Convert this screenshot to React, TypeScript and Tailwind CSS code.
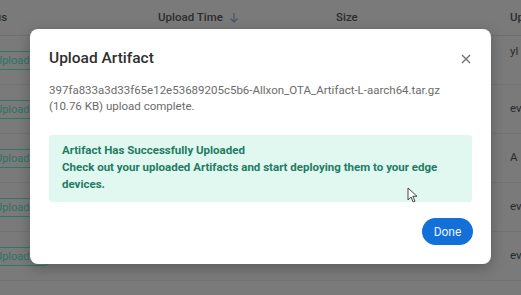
import React from "react";

const rows = [
  { right: "yl", rightOffset: true },
  { right: "ev" },
  { right: "A" },
  { right: "ev" },
  { right: "ev" },
];

export default function App() {
  return (
    <div className="relative w-[521px] h-[295px] overflow-hidden bg-[#7a7a7a] font-['Roboto','Liberation_Sans',sans-serif]">
      {/* background table */}
      <div className="flex flex-col">
        <div className="flex h-[36px] items-center border-b border-[#6e6e6e] text-[11.5px] font-medium text-[#2d2d2d]">
          <div className="-ml-[26px] w-[184px] shrink-0">Status</div>
          <div className="flex w-[178px] shrink-0 items-center gap-[6px]">
            <span>Upload Time</span>
            <svg width="10" height="12" viewBox="0 0 10 12" className="text-[#4a5666]">
              <path d="M5 1v9M1.5 6.5 5 10l3.5-3.5" fill="none" stroke="currentColor" strokeWidth="1.3" />
            </svg>
          </div>
          <div className="w-[174px] shrink-0">Size</div>
          <div>Uploader</div>
        </div>
        {rows.map((r, i) => (
          <div key={i} className="flex h-[49px] items-center border-b border-[#727272] text-[11.5px] text-[#2a2a2a]">
            <div className="-ml-[12px] w-[170px] shrink-0">
              <span className="inline-block h-[19px] rounded-[3px] border border-[#2c7a66] px-[6px] text-[11px] leading-[17px] text-[#2a7463]">
                Uploaded
              </span>
            </div>
            <div className="w-[352px] shrink-0" />
            <div className={r.rightOffset ? "-mt-[16px]" : ""}>{r.right}</div>
          </div>
        ))}
      </div>

      {/* modal */}
      <div className="absolute left-[30px] top-[29px] flex h-[235px] w-[461px] flex-col rounded-[8px] bg-white pl-[19px] pr-[18px] pt-[18px] shadow-[0_4px_14px_rgba(0,0,0,0.25)]">
        <div className="flex h-[24px] items-center justify-between">
          <div className="text-[15.5px] font-medium text-[#2f2f2f]">Upload Artifact</div>
          <svg width="10" height="10" viewBox="0 0 10 10" className="mr-[2px] text-[#6f6f6f]">
            <path d="M1 1l8 8M9 1l-8 8" stroke="currentColor" strokeWidth="1.3" />
          </svg>
        </div>
        <div className="mt-[11px] text-[11.5px] leading-[16px] text-[#6b6b6b]">
          <div>397fa833a3d33f65e12e53689205c5b6-Allxon_OTA_Artifact-L-aarch64.tar.gz</div>
          <div>(10.76 KB) upload complete.</div>
        </div>
        <div className="mt-[21px] w-[423px] rounded-[3px] bg-[#e0f8f0] pb-[9px] pl-[13px] pr-[13px] pt-[7px] text-[11.5px] font-bold leading-[17px] text-[#237b62]">
          <div>Artifact Has Successfully Uploaded</div>
          <div>Check out your uploaded Artifacts and start deploying them to your edge devices.</div>
        </div>
        <div className="mt-[16px] flex justify-end">
          <button className="flex h-[27px] w-[51px] items-center justify-center rounded-full bg-[#1270d8] text-[12px] text-[#eef4fc]">
            Done
          </button>
        </div>
      </div>

      {/* cursor */}
      <svg className="absolute left-[407px] top-[187px]" width="11" height="16" viewBox="0 0 11 16">
        <path d="M1 1v12l3-3 2.2 5 1.8-.8-2.2-4.9H10L1 1z" fill="#fff" stroke="#444" strokeWidth="1" strokeLinejoin="round" />
      </svg>
    </div>
  );
}
